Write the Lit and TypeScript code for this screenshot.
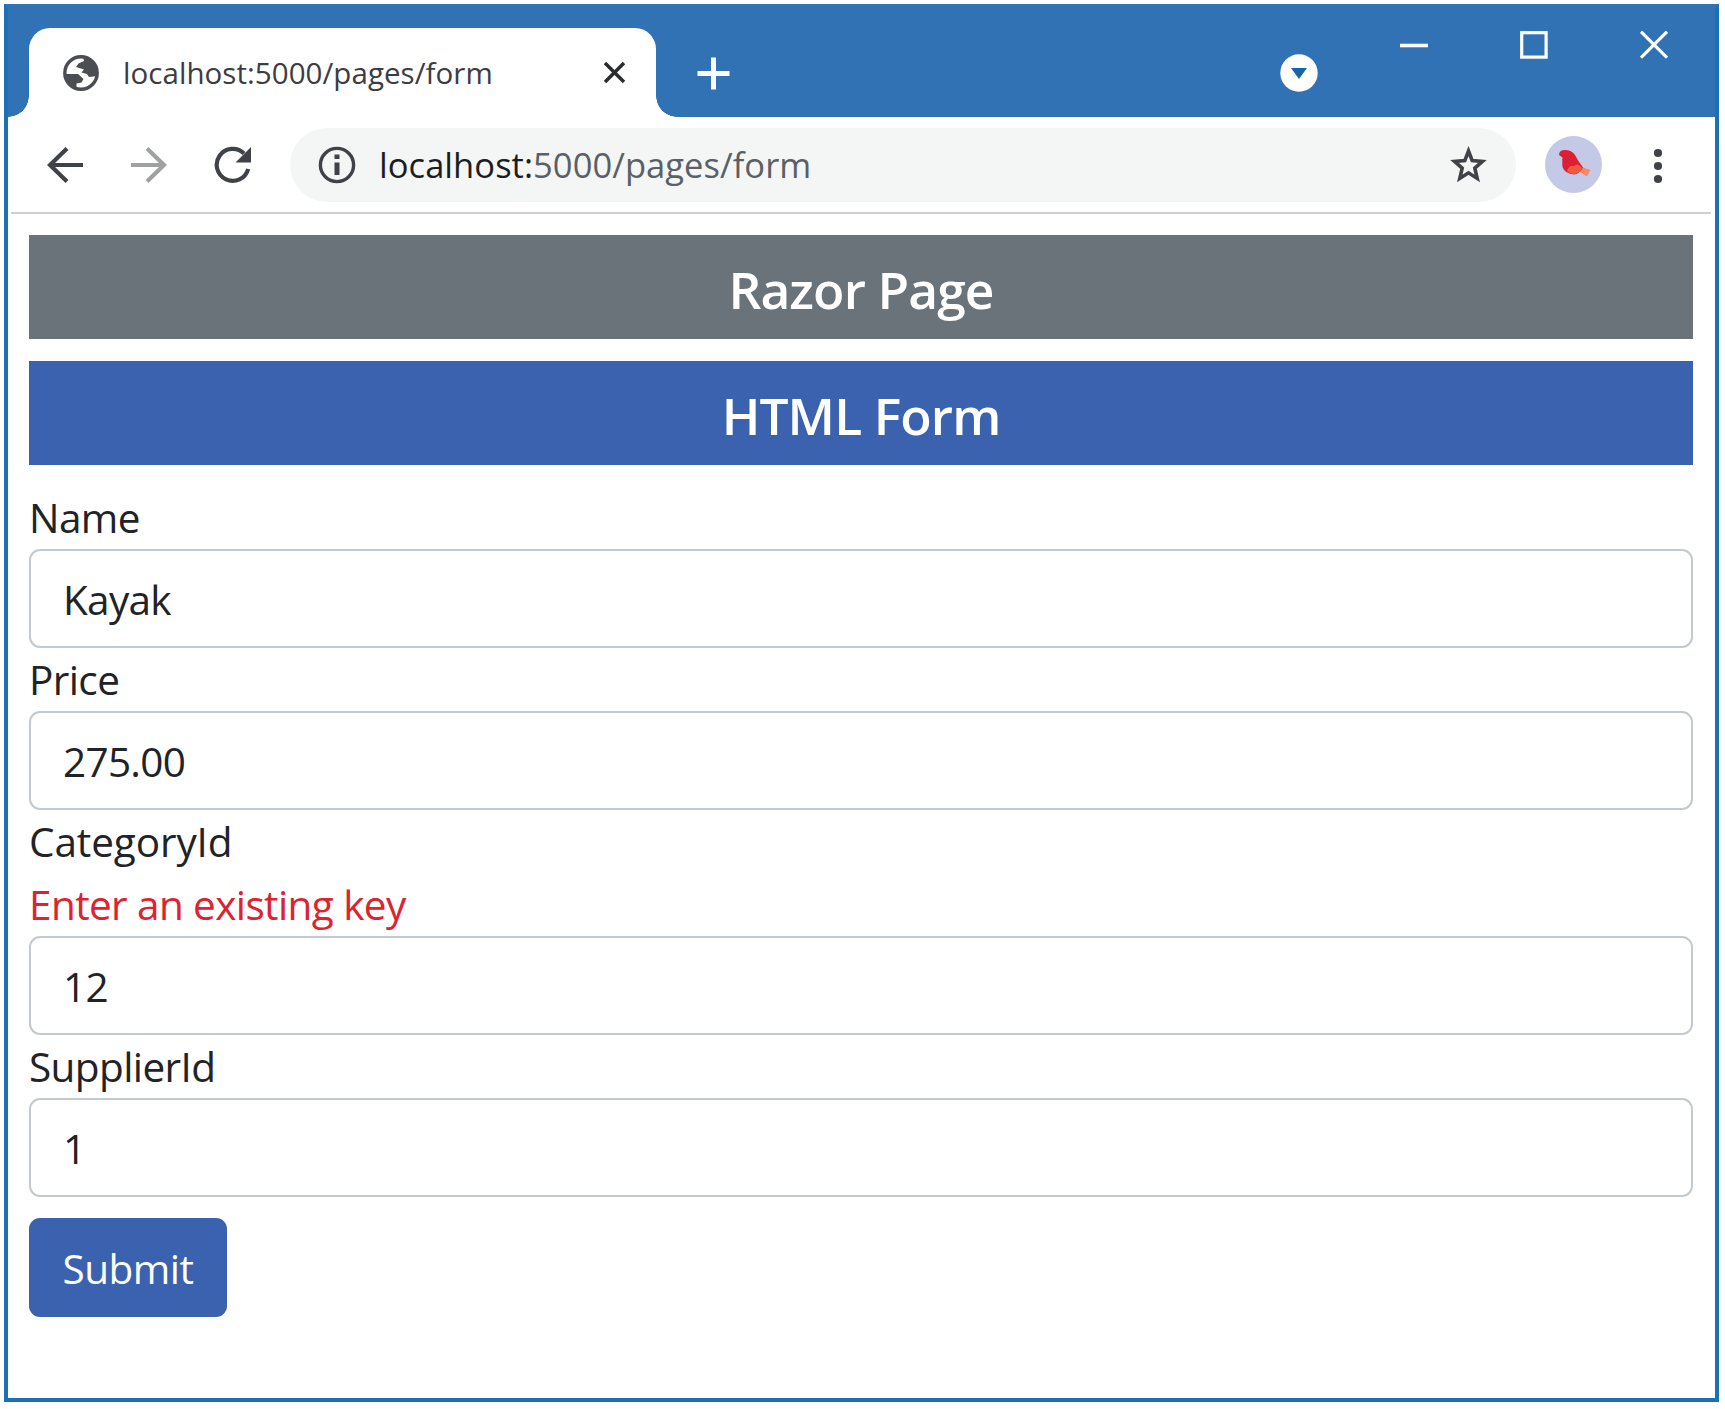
import { LitElement, html, css, svg } from "lit";
import { customElement, property } from "lit/decorators.js";

interface Field {
  label: string;
  value: string;
  error?: string;
  tone: string;
}

const FIELDS: Field[] = [
  { label: "Name", value: "Kayak", tone: "" },
  { label: "Price", value: "275.00", tone: "" },
  { label: "CategoryId", value: "12", error: "Enter an existing key", tone: "loose" },
  { label: "SupplierId", value: "1", tone: "" },
];

@customElement("browser-titlebar")
export class BrowserTitlebar extends LitElement {
  @property() heading = "";

  static styles = css`
    :host {
      display: flex;
      align-items: flex-start;
      height: 109px;
      background: #3072b4;
    }
    svg {
      display: block;
      flex: none;
    }
    .tab {
      position: relative;
      display: flex;
      align-items: center;
      box-sizing: border-box;
      width: 627px;
      height: 89px;
      margin: 20px 0 0 21px;
      padding: 0 30px 0 34px;
      border-radius: 21px 21px 0 0;
      background: #fff;
    }
    .tab::before,
    .tab::after {
      content: "";
      position: absolute;
      bottom: 0;
      width: 21px;
      height: 21px;
    }
    .tab::before {
      left: -21px;
      background: radial-gradient(circle at 0 0, transparent 20.5px, #fff 21px);
    }
    .tab::after {
      right: -21px;
      background: radial-gradient(circle at 100% 0, transparent 20.5px, #fff 21px);
    }
    .title {
      flex: 1;
      margin: 0 0 0 24px;
      font-size: 29.5px;
      line-height: 40px;
      letter-spacing: 0.05px;
      color: #3c3d42;
      white-space: nowrap;
    }
    .plus {
      margin: 49px 0 0 41px;
    }
    .search {
      margin: 46px 82px 0 auto;
    }
    .controls {
      display: flex;
      gap: 92px;
      margin: 23px 47px 0 0;
    }
  `;

  render() {
    return html`
      <div class="tab">
        <svg width="36" height="36" viewBox="0 0 36 36">
          <circle cx="18" cy="18" r="16.2" fill="#fff" stroke="#4a4d52" stroke-width="3.4" />
          <path d="M20 2 L21 6 L15.5 8.5 L13 12 L21 14.5 L18.5 17.5 L24 19 L26 22 L34.5 21 A17 17 0 0 0 20 2Z" fill="#4a4d52" />
          <path d="M1.5 19 L15 19 L20.5 24 L18.5 27.5 L13.5 28.5 L13.5 34 A17 17 0 0 1 1.5 19Z" fill="#4a4d52" />
        </svg>
        <span class="title">${this.heading}</span>
        <svg width="23" height="23" viewBox="0 0 23 23">
          <path d="M2 2 L21 21 M21 2 L2 21" stroke="#2b2c2f" stroke-width="3.5" />
        </svg>
      </div>
      <svg class="plus" width="33" height="33" viewBox="0 0 33 33">
        <path d="M16.5 0.5 V32.5 M0.5 16.5 H32.5" stroke="#fff" stroke-width="5" />
      </svg>
      <svg class="search" width="38" height="38" viewBox="0 0 38 38">
        <circle cx="19" cy="19" r="18.7" fill="#fff" />
        <path d="M11 14 H27 L19 25Z" fill="#1565ad" />
      </svg>
      <div class="controls">
        <svg width="28" height="28" viewBox="0 0 28 28">
          <path d="M0 14.5 H28" stroke="#fff" stroke-width="3.6" />
        </svg>
        <svg width="28" height="28" viewBox="0 0 28 28">
          <rect x="1.7" y="1.7" width="24.4" height="24.4" fill="none" stroke="#fff" stroke-width="3.2" />
        </svg>
        <svg width="28" height="28" viewBox="0 0 28 28">
          <path d="M1 0.7 L27 26.7 M27 0.7 L1 26.7" stroke="#fff" stroke-width="3.2" />
        </svg>
      </div>
    `;
  }
}

@customElement("browser-toolbar")
export class BrowserToolbar extends LitElement {
  @property() host = "";
  @property() path = "";

  static styles = css`
    :host {
      display: flex;
      align-items: center;
      box-sizing: border-box;
      height: 97px;
      margin: 0 4px 0 3px;
      padding: 0 47px 0 36px;
      border-bottom: 2px solid #cdd0d4;
    }
    svg {
      display: block;
      flex: none;
    }
    .forward {
      margin-left: 48px;
    }
    .reload {
      margin-left: 47px;
    }
    .address {
      display: flex;
      flex: 1;
      align-items: center;
      box-sizing: border-box;
      height: 74px;
      margin: 0 29px 0 38px;
      padding: 0 29px 0 28px;
      border-radius: 37px;
      background: #f4f6f5;
    }
    .url {
      flex: 1;
      margin: 1px 0 0 23px;
      font-size: 34.5px;
      line-height: 48px;
      letter-spacing: 0.05px;
      color: #5b5f66;
      white-space: nowrap;
    }
    .host {
      color: #1c1d22;
    }
    .menu {
      margin-left: 50px;
    }
  `;

  render() {
    const arrow = svg`<path d="M36 18 H4 M20 1.5 L3 18 L20 34.5" fill="none" stroke="currentColor" stroke-width="4.2" />`;
    return html`
      <svg width="36" height="36" viewBox="0 0 36 36" color="#3f4247">${arrow}</svg>
      <svg class="forward" width="36" height="36" viewBox="0 0 36 36" color="#9fa1a5">
        <g transform="rotate(180 18 18)">${arrow}</g>
      </svg>
      <svg class="reload" width="38" height="38" viewBox="0 0 38 38">
        <path d="M34.2 23 A16 16 0 1 1 30 7.5" fill="none" stroke="#3f4247" stroke-width="4.2" />
        <path d="M37 1 V16.5 H21.5Z" fill="#3f4247" />
      </svg>
      <div class="address">
        <svg width="38" height="38" viewBox="0 0 38 38">
          <circle cx="19" cy="19" r="16.6" fill="none" stroke="#3f4247" stroke-width="3.4" />
          <path d="M19 8.5 V13 M19 16.5 V29" stroke="#3f4247" stroke-width="5" />
        </svg>
        <span class="url"><span class="host">${this.host}</span>${this.path}</span>
        <svg width="38" height="38" viewBox="0 0 38 38">
          <path
            d="M19.5 5 L23.2 14.6 L33.4 15.4 L25.8 22.1 L28.2 32.4 L19.5 26.8 L10.8 32.400 L13.200 22.1 L5.600 15.4 L15.8 14.6Z"
            fill="none" stroke="#3f4247" stroke-width="3.6" />
        </svg>
      </div>
      <svg width="57" height="57" viewBox="0 0 57 57">
        <circle cx="28.5" cy="28.5" r="28.5" fill="#c5c9e8" />
        <path d="M32 26 L38 31.5 L45.5 34 L42 40.500 L35 36Z" fill="#f58a68" />
        <path d="M14 19 Q14 14 20 14 Q26.500 14 30 19 Q33 25 38 31.500 Q34 38 29 38.500 Q20 38 17.500 31 Q17 24 17.500 21.500Z" fill="#dc1f35" />
        <path d="M22 35 Q24 29 29 30 Q33 26 37 32 Q34 37.500 29 38.300 Q24.500 38 22 35Z" fill="#ee5b3c" />
      </svg>
      <svg class="menu" width="12" height="38" viewBox="0 0 12 38">
        <g fill="#3f4247">
          <circle cx="6" cy="7" r="4.1" />
          <circle cx="6" cy="20" r="4.1" />
          <circle cx="6" cy="33" r="4.1" />
        </g>
      </svg>
    `;
  }
}

@customElement("product-form")
export class ProductForm extends LitElement {
  static styles = css`
    form {
      display: flex;
      flex-direction: column;
      margin: 0;
      font-size: 40.5px;
      letter-spacing: -0.6px;
      color: #212327;
    }
    label,
    .error {
      height: 63px;
      line-height: 64px;
      box-sizing: border-box;
    }
    .loose {
      letter-spacing: -0.1px;
    }
    .error {
      color: #dc2430;
    }
    input {
      box-sizing: border-box;
      width: 100%;
      height: 99px;
      margin: 0;
      padding: 1px 32px 0;
      border: 2px solid #c3c8d1;
      border-radius: 11px;
      outline: none;
      background: #fff;
      font: inherit;
      letter-spacing: -0.7px;
      color: inherit;
    }
    button {
      align-self: flex-start;
      width: 198px;
      height: 99px;
      margin: 21px 0 0;
      padding: 1px 0 0;
      border: 0;
      border-radius: 11px;
      background: #3a62ae;
      font: inherit;
      letter-spacing: -0.5px;
      color: #fff;
    }
  `;

  render() {
    return html`
      <form @submit=${(e: Event) => e.preventDefault()}>
        ${FIELDS.map(
          (f) => html`
            <label for=${f.label} class=${f.tone}>${f.label}</label>
            ${f.error ? html`<div class="error">${f.error}</div>` : null}
            <input id=${f.label} .value=${f.value} />
          `
        )}
        <button type="submit">Submit</button>
      </form>
    `;
  }
}

@customElement("app-root")
export class AppRoot extends LitElement {
  static styles = css`
    :host {
      display: block;
      box-sizing: border-box;
      height: 1409px;
      padding: 4px 6px 7px 4px;
      background: #fff;
      font-family: "Open Sans", "Noto Sans", sans-serif;
    }
    .window {
      box-sizing: border-box;
      height: 1398px;
      border: 4px solid #1b70b7;
      border-top-color: #3072b4;
      background: #fff;
    }
    .page {
      display: flex;
      flex-direction: column;
      padding: 21px 22px 0 21px;
    }
    .banner {
      height: 104px;
      margin: 0 0 22px;
      font-size: 51.5px;
      font-weight: 600;
      line-height: 108px;
      letter-spacing: -0.9px;
      text-align: center;
      color: #fff;
    }
    .banner.grey {
      background: #6a727a;
    }
    .banner.blue {
      margin-bottom: 21px;
      background: #3a62ae;
    }
  `;

  render() {
    return html`
      <div class="window">
        <browser-titlebar heading="localhost:5000/pages/form"></browser-titlebar>
        <browser-toolbar host="localhost:" path="5000/pages/form"></browser-toolbar>
        <main class="page">
          <h4 class="banner grey">Razor Page</h4>
          <h4 class="banner blue">HTML Form</h4>
          <product-form></product-form>
        </main>
      </div>
    `;
  }
}
